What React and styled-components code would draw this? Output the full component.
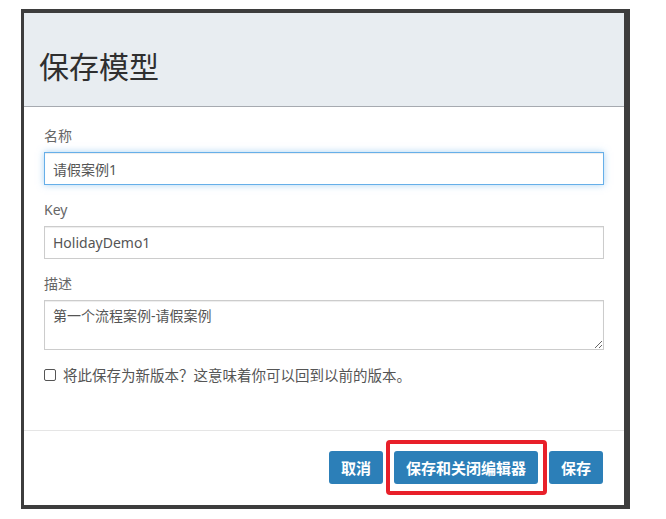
import React from "react";
import styled, { createGlobalStyle, css } from "styled-components";

const GlobalStyle = createGlobalStyle`
    html, body {
        margin: 0;
        padding: 0;
        background: #fff;
    }
    body {
        font-family: "Noto Sans", "Noto Sans CJK SC", sans-serif;
        color: #333;
    }
    * {
        box-sizing: border-box;
    }
`;

const Frame = styled.div`
    margin: 9px 0 0 21px;
    width: 609px;
    border-style: solid;
    border-color: #3d3d3d;
    border-width: 4px 6px 4px 3px;
    background: #fff;
`;
const Header = styled.div`
    background: #e8edf1;
    border-bottom: 1px solid #a6aab0;
    padding: 36px 15px 24px;
`;
const Title = styled.h2`
    margin: 0;
    font-size: 30px;
    line-height: 33px;
    font-weight: 400;
    color: #2f2f2f;
    font-family: "Noto Sans CJK SC", sans-serif;
`;
const Body = styled.div`
    padding: 20px 20px 46px;
`;
const FormGroup = styled.div`
    margin-bottom: 16px;
`;
const Label = styled.label`
    display: block;
    font-size: 14px;
    line-height: 18px;
    color: #666;
    margin-bottom: 7px;
`;
const fieldBase = css`
    display: block;
    width: 100%;
    border: 1px solid #ccc;
    border-radius: 0;
    font-family: "Noto Sans", "Noto Sans CJK SC", sans-serif;
    font-size: 14px;
    color: #555;
    background: #fff;
    outline: none;
    box-shadow: inset 0 1px 1px rgba(0, 0, 0, 0.075);
    ${(props) =>
        props.$focused &&
        css`
            border-color: #66afe9;
            box-shadow: inset 0 1px 1px rgba(0, 0, 0, 0.075),
                0 0 7px rgba(102, 175, 233, 0.55);
        `};
`;
const Input = styled.input`
    ${fieldBase};
    height: 33px;
    padding: 0 8px;
    line-height: 31px;
`;
const TextArea = styled.textarea`
    ${fieldBase};
    height: 50px;
    padding: 5px 8px;
    line-height: 20px;
    resize: vertical;
`;
const CheckRow = styled.label`
    display: flex;
    align-items: center;
    column-gap: 7px;
    font-size: 14.5px;
    line-height: 18px;
    color: #555;
    font-family: "Noto Sans CJK SC", sans-serif;
`;
const Check = styled.input`
    appearance: none;
    margin: 0;
    width: 12px;
    height: 12px;
    border: 1px solid #555;
    border-radius: 2px;
    background: #fff;
`;
const Footer = styled.div`
    border-top: 1px solid #e5e5e5;
    padding: 20px 21px 21px 20px;
    display: flex;
    justify-content: flex-end;
    column-gap: 11px;
`;
const Highlight = styled.span`
    position: relative;
    display: inline-flex;
    &::after {
        content: "";
        position: absolute;
        inset: -11px -9px -11px -8px;
        border: 4px solid #e8202a;
        border-radius: 4px;
        pointer-events: none;
    }
`;
const Button = styled.button`
    height: 33px;
    padding: 0 12px;
    border: none;
    border-radius: 3px;
    background: #2c7fb8;
    color: #fff;
    font-family: "Noto Sans CJK SC", sans-serif;
    font-size: 15px;
    font-weight: 700;
    cursor: pointer;
`;

const App = () => {
    return (
        <>
            <GlobalStyle />
            <Frame>
                <Header>
                    <Title>保存模型</Title>
                </Header>
                <Body>
                    <FormGroup>
                        <Label>名称</Label>
                        <Input $focused defaultValue="请假案例1" />
                    </FormGroup>
                    <FormGroup>
                        <Label>Key</Label>
                        <Input defaultValue="HolidayDemo1" />
                    </FormGroup>
                    <FormGroup>
                        <Label>描述</Label>
                        <TextArea defaultValue="第一个流程案例-请假案例" />
                    </FormGroup>
                    <CheckRow>
                        <Check type="checkbox" />
                        将此保存为新版本？这意味着你可以回到以前的版本。
                    </CheckRow>
                </Body>
                <Footer>
                    <Button>取消</Button>
                    <Highlight>
                        <Button>保存和关闭编辑器</Button>
                    </Highlight>
                    <Button>保存</Button>
                </Footer>
            </Frame>
        </>
    );
};

export default App;
